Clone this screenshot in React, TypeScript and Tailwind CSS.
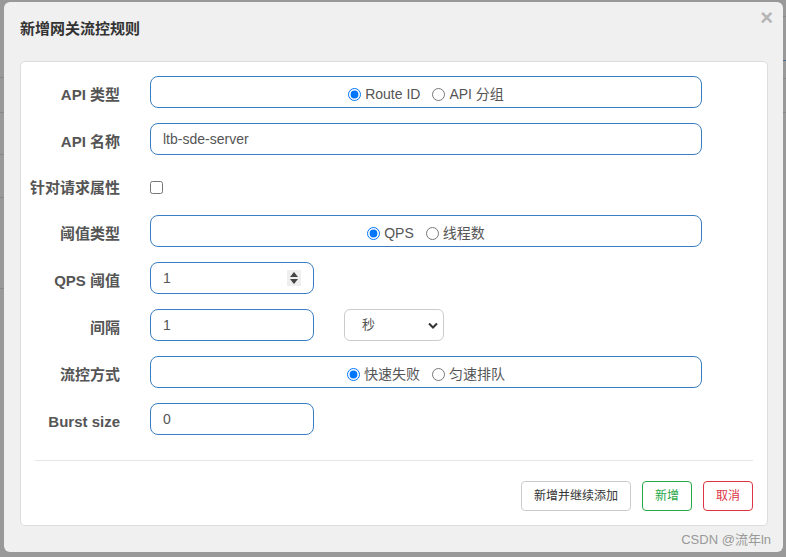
import React, { useState } from 'react';

const font = { fontFamily: '"Liberation Sans", Arial, "Noto Sans CJK SC", sans-serif' };

function Label({ children }: { children: React.ReactNode }) {
    return (
        <div className="w-[100px] shrink-0 pt-[6px] text-right text-[15px] font-bold text-[#555] whitespace-nowrap">
            {children}
        </div>
    );
}

function RadioGroup({ name, options, value, onChange }: {
    name: string;
    options: string[];
    value: string;
    onChange: (v: string) => void;
}) {
    return (
        <div className="w-[552px] h-[32px] pt-[4px] border border-[#3a7ec1] rounded-[8px] flex items-center justify-center gap-[12px] text-[14px] text-[#555]">
            {options.map(opt => (
                <label key={opt} className="flex items-center gap-[4px]">
                    <input
                        type="radio"
                        name={name}
                        checked={value === opt}
                        onChange={() => onChange(opt)}
                        className="m-0 w-[13px] h-[13px] accent-[#0075ff]"
                    />
                    <span>{opt}</span>
                </label>
            ))}
        </div>
    );
}

function TextInput({ value, wide = false }: { value: string; wide?: boolean }) {
    return (
        <input
            type="text"
            defaultValue={value}
            className={`${wide ? 'w-[552px]' : 'w-[164px]'} h-[32px] border border-[#3a7ec1] rounded-[8px] px-[12px] text-[14px] text-[#555] outline-none`}
        />
    );
}

export default function App() {
    const [apiType, setApiType] = useState('Route ID');
    const [grade, setGrade] = useState('QPS');
    const [behavior, setBehavior] = useState('快速失败');

    return (
        <div className="relative w-[786px] h-[557px] bg-[#999] overflow-hidden" style={font}>
            {/* page behind the modal */}
            <div className="absolute left-0 top-[77px] w-[4px] h-px bg-[#888]" />
            <div className="absolute left-0 top-[112px] w-[4px] h-px bg-[#888]" />
            <div className="absolute left-0 top-[154px] w-[4px] h-px bg-[#888]" />
            <div className="absolute left-0 top-[197px] w-[4px] h-px bg-[#888]" />
            <div className="absolute left-0 top-[288px] w-[4px] h-px bg-[#888]" />
            <div className="absolute right-0 top-[16px] w-[4px] h-px bg-[#888]" />
            <div className="absolute right-0 top-[60px] w-[4px] h-px bg-[#4a6a8a]" />
            <div className="absolute right-0 top-[78px] w-[4px] h-px bg-[#888]" />
            <div className="absolute right-0 top-[112px] w-[4px] h-px bg-[#888]" />

            <div className="relative ml-[4px] mt-[2px] w-[779px] h-[550px] bg-[#f0f0f0] rounded-[6px] px-[16px]">
                <div className="pt-[16px] h-[59px] text-[15px] leading-[22px] font-bold text-[#333]">
                    新增网关流控规则
                </div>
                <button className="absolute right-[10px] top-[5px] text-[22px] font-bold leading-none text-[#b5b5b5]">
                    ×
                </button>

                <div className="w-[748px] bg-white border border-[#ddd] rounded-[5px] pt-[14px] pb-[14px]">
                    <div className="flex flex-col gap-[15px] -ml-px">
                        <div className="flex items-center gap-[30px]">
                            <Label>API 类型</Label>
                            <RadioGroup name="apiType" options={['Route ID', 'API 分组']} value={apiType} onChange={setApiType} />
                        </div>
                        <div className="flex items-center gap-[30px]">
                            <Label>API 名称</Label>
                            <TextInput value="ltb-sde-server" wide />
                        </div>
                        <div className="flex items-center gap-[30px] h-[30px]">
                            <Label>针对请求属性</Label>
                            <div className="pt-[4px] flex">
                                <input type="checkbox" className="m-0 w-[13px] h-[13px]" />
                            </div>
                        </div>
                        <div className="flex items-center gap-[30px]">
                            <Label>阈值类型</Label>
                            <RadioGroup name="grade" options={['QPS', '线程数']} value={grade} onChange={setGrade} />
                        </div>
                        <div className="flex items-center gap-[30px]">
                            <Label>QPS 阈值</Label>
                            <div className="relative">
                                <TextInput value="1" />
                                <div className="absolute right-[13px] top-[8px] w-[14px] h-[16px] bg-[#eee] flex flex-col items-center justify-center gap-[2px]">
                                    <svg width="8" height="5" viewBox="0 0 8 5"><path d="M4 0L8 5H0Z" fill="#444" /></svg>
                                    <svg width="8" height="5" viewBox="0 0 8 5"><path d="M0 0H8L4 5Z" fill="#444" /></svg>
                                </div>
                            </div>
                        </div>
                        <div className="flex items-center gap-[30px]">
                            <Label>间隔</Label>
                            <div className="flex items-center gap-[30px]">
                                <TextInput value="1" />
                                <div className="relative">
                                    <select className="appearance-none w-[100px] h-[32px] border border-[#ccc] rounded-[6px] pl-[17px] text-[13px] text-[#555] bg-white outline-none">
                                        <option>秒</option>
                                        <option>分</option>
                                        <option>时</option>
                                        <option>天</option>
                                    </select>
                                    <svg className="absolute right-[6px] top-[13px] pointer-events-none" width="10" height="7" viewBox="0 0 10 7">
                                        <path d="M1 1.5L5 5.5L9 1.5" stroke="#333" strokeWidth="2" fill="none" />
                                    </svg>
                                </div>
                            </div>
                        </div>
                        <div className="flex items-center gap-[30px]">
                            <Label>流控方式</Label>
                            <RadioGroup name="behavior" options={['快速失败', '匀速排队']} value={behavior} onChange={setBehavior} />
                        </div>
                        <div className="flex items-center gap-[30px]">
                            <Label>Burst size</Label>
                            <TextInput value="0" />
                        </div>
                    </div>

                    <div className="mx-[14px] mt-[25px] border-t border-[#e5e5e5]" />

                    <div className="mx-[14px] mt-[20px] flex justify-end gap-[11px] text-[12px]">
                        <button className="h-[30px] px-[12px] border border-[#ccc] rounded-[4px] bg-white text-[#333]">
                            新增并继续添加
                        </button>
                        <button className="h-[30px] px-[12px] border border-[#28a745] rounded-[4px] bg-white text-[#28a745]">
                            新增
                        </button>
                        <button className="h-[30px] px-[12px] border border-[#dc3545] rounded-[4px] bg-white text-[#dc3545]">
                            取消
                        </button>
                    </div>
                </div>

                <div className="absolute right-[12px] bottom-[3px] text-[13px] text-[#999]">
                    CSDN @流年ln
                </div>
            </div>
        </div>
    );
}
